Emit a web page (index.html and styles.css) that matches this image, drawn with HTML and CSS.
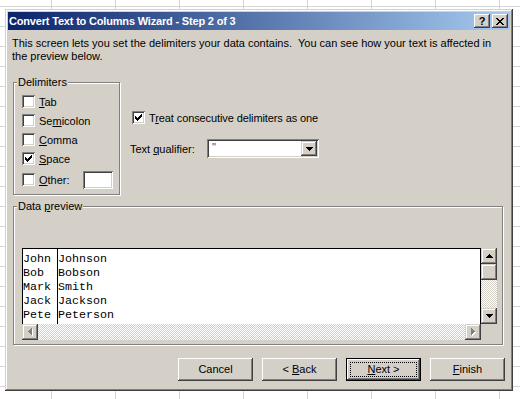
FILE: index.html
```html
<!DOCTYPE html>
<html>
<head>
<meta charset="utf-8">
<link rel="stylesheet" href="styles.css">
</head>
<body>
<div class="dialog">
  <div class="titlebar">
    <span class="title">Convert Text to Columns Wizard - Step 2 of 3</span>
    <div class="tb-buttons">
      <span class="tb-btn help">?</span>
      <span class="tb-btn close"><svg width="8" height="7" viewBox="0 0 8 7"><path d="M0 0h2v1H0zM6 0h2v1H6zM1 1h2v1H1zM5 1h2v1H5zM2 2h4v1H2zM3 3h2v1H3zM2 4h4v1H2zM1 5h2v1H1zM5 5h2v1H5zM0 6h2v1H0zM6 6h2v1H6z" fill="#000"/></svg></span>
    </div>
  </div>
  <div class="content">
    <p class="intro">This screen lets you set the delimiters your data contains.&nbsp; You can see how your text is affected in<br>the preview below.</p>
    <div class="options">
      <div class="group delims">
        <span class="group-label">Delimiters</span>
        <div class="check-row"><span class="checkbox"></span><span><u>T</u>ab</span></div>
        <div class="check-row"><span class="checkbox"></span><span>Se<u>m</u>icolon</span></div>
        <div class="check-row"><span class="checkbox"></span><span><u>C</u>omma</span></div>
        <div class="check-row"><span class="checkbox checked"><svg width="13" height="13" viewBox="0 0 13 13"><path d="M3.5 5v3M4.5 6v3M5.5 7v3M6.5 6v3M7.5 5v3M8.5 4v3M9.5 3v3" stroke="#000" stroke-width="1"/></svg></span><span><u>S</u>pace</span></div>
        <div class="check-row other-row"><span class="checkbox"></span><span><u>O</u>ther:</span><span class="textbox"></span></div>
      </div>
      <div class="right-col">
        <div class="check-row treat-row"><span class="checkbox checked"><svg width="13" height="13" viewBox="0 0 13 13"><path d="M3.5 5v3M4.5 6v3M5.5 7v3M6.5 6v3M7.5 5v3M8.5 4v3M9.5 3v3" stroke="#000" stroke-width="1"/></svg></span><span class="treat-label">T<u>r</u>eat consecutive delimiters as one</span></div>
        <div class="qual-row">
          <span class="qual-label">Text <u>q</u>ualifier:</span>
          <span class="combo"><span class="combo-value">"</span><span class="combo-btn"><svg width="7" height="4" viewBox="0 0 7 4"><path d="M0 0h7v1H0zM1 1h5v1H1zM2 2h3v1H2zM3 3h1v1H3z" fill="#000"/></svg></span></span>
        </div>
      </div>
    </div>
    <div class="group preview-group">
      <span class="group-label">Data <u>p</u>review</span>
      <div class="preview">
        <div class="data">
          <div class="col col1">John<br>Bob<br>Mark<br>Jack<br>Pete</div>
          <div class="col col2">Johnson<br>Bobson<br>Smith<br>Jackson<br>Peterson</div>
        </div>
        <div class="vscroll">
          <span class="sb-btn"><svg width="7" height="4" viewBox="0 0 7 4"><path d="M3 0h1v1H3zM2 1h3v1H2zM1 2h5v1H1zM0 3h7v1H0z" fill="#000"/></svg></span>
          <span class="sb-btn"></span>
          <span class="track"></span>
          <span class="sb-btn"><svg width="7" height="4" viewBox="0 0 7 4"><path d="M0 0h7v1H0zM1 1h5v1H1zM2 2h3v1H2zM3 3h1v1H3z" fill="#000"/></svg></span>
        </div>
        <div class="hscroll">
          <span class="sb-btn"><svg width="5" height="8" viewBox="0 0 5 8"><path d="M4 1h1v7H4zM3 2h1v5H3zM2 3h1v3H2zM1 4h1v1H1z" fill="#fff"/><path d="M3 0h1v7H3zM2 1h1v5H2zM1 2h1v3H1zM0 3h1v1H0z" fill="#808080"/></svg></span>
          <span class="track"></span>
          <span class="sb-btn"><svg width="5" height="8" viewBox="0 0 5 8"><path d="M1 1h1v7H1zM2 2h1v5H2zM3 3h1v3H3zM4 4h1v1H4z" fill="#fff"/><path d="M0 0h1v7H0zM1 1h1v5H1zM2 2h1v3H2zM3 3h1v1H3z" fill="#808080"/></svg></span>
        </div>
        <div class="corner"></div>
      </div>
    </div>
    <div class="buttons">
      <span class="btn"><span>Cancel</span></span>
      <span class="btn"><span>&lt; <u>B</u>ack</span></span>
      <span class="btn default"><span><u>N</u>ext &gt;</span></span>
      <span class="btn"><span><u>F</u>inish</span></span>
    </div>
  </div>
</div>
</body>
</html>
```
FILE: styles.css
```css
html, body {
  margin: 0;
  height: 100%;
}
body {
  background-color: #fff;
  background-image:
    linear-gradient(to right, #d4d4d4 1px, transparent 1px),
    linear-gradient(to bottom, #d4d4d4 1px, transparent 1px);
  background-size: 64px 20px;
  background-position: 51px 6px;
  font-family: "Liberation Sans", Arial, sans-serif;
  font-size: 11px;
  color: #000;
  overflow: hidden;
}
.dialog {
  width: 508px;
  height: 382px;
  margin: 9px 0 0 5px;
  box-sizing: border-box;
  padding: 3px;
  background: #d4d0c8;
  box-shadow: inset -1px -1px #404040, inset 1px 1px #d4d0c8, inset -2px -2px #808080, inset 2px 2px #fff;
  display: flex;
  flex-direction: column;
}
.titlebar {
  height: 18px;
  flex: none;
  background: linear-gradient(to right, #0a246a, #a6caf0);
  display: flex;
  align-items: center;
  justify-content: space-between;
  padding: 0 2px 0 1px;
  color: #fff;
  font-weight: bold;
}
.title {
  line-height: 13px;
  letter-spacing: -0.18px;
}
.tb-buttons { display: flex; gap: 2px; }
.tb-btn {
  width: 16px;
  height: 14px;
  box-sizing: border-box;
  background: #d4d0c8;
  box-shadow: inset -1px -1px #404040, inset 1px 1px #fff, inset -2px -2px #808080;
  display: flex;
  align-items: center;
  justify-content: center;
  color: #000;
  font-size: 11px;
  line-height: 11px;
}
.content {
  flex: 1;
  display: flex;
  flex-direction: column;
}
.intro {
  margin: 7px 0 0 4px;
  line-height: 13px;
}
.options {
  display: flex;
  margin: 19px 0 0 5px;
}
.group {
  position: relative;
  border: 1px solid #808080;
  box-shadow: inset 1px 1px #fff, 1px 1px #fff;
  box-sizing: border-box;
}
.group-label {
  position: absolute;
  top: -7px;
  left: 3px;
  padding: 0 1px;
  background: #d4d0c8;
  line-height: 13px;
}
.delims {
  width: 107px;
  height: 113px;
  padding: 9px 0 0 8px;
}
.check-row {
  display: flex;
  align-items: center;
  height: 19px;
}
.checkbox {
  flex: none;
  width: 13px;
  height: 13px;
  box-sizing: border-box;
  background: #fff;
  box-shadow: inset 1px 1px #808080, inset -1px -1px #fff, inset 2px 2px #404040, inset -2px -2px #d4d0c8;
  margin-right: 4px;
}
.checkbox svg { display: block; }
.other-row {
  margin-top: 2px;
  padding-right: 6px;
}
.textbox {
  margin-left: auto;
  width: 30px;
  height: 18px;
  box-sizing: border-box;
  background: #fff;
  box-shadow: inset 1px 1px #808080, inset -1px -1px #fff, inset 2px 2px #404040, inset -2px -2px #d4d0c8;
}
.right-col {
  margin-left: 10px;
}
.treat-row {
  margin-top: 26px;
  padding-left: 2px;
}
.treat-label { letter-spacing: -0.1px; }
.qual-row {
  display: flex;
  align-items: center;
  height: 19px;
  margin-top: 12px;
}
.qual-label { width: 77px; }
.combo {
  width: 112px;
  height: 19px;
  box-sizing: border-box;
  padding: 2px;
  background: #fff;
  box-shadow: inset 1px 1px #808080, inset -1px -1px #fff, inset 2px 2px #404040, inset -2px -2px #d4d0c8;
  display: flex;
  justify-content: space-between;
}
.combo-value {
  color: #0a4ea5;
  padding-left: 3px;
  line-height: 13px;
}
.combo-btn {
  width: 16px;
  height: 15px;
  box-sizing: border-box;
  background: #d4d0c8;
  box-shadow: inset -1px -1px #404040, inset 1px 1px #d4d0c8, inset -2px -2px #808080, inset 2px 2px #fff;
  display: flex;
  align-items: center;
  justify-content: center;
}
.preview-group {
  margin: 11px 0 0 5px;
  width: 490px;
  height: 139px;
}
.preview {
  margin: 41px 0 0 8px;
  width: 475px;
  height: 92px;
  display: grid;
  grid-template-columns: 1fr 16px;
  grid-template-rows: 1fr 16px;
}
.data {
  background: #fff;
  border: 1px solid #000;
  border-bottom: none;
  display: flex;
  font-family: "Liberation Mono", "Courier New", monospace;
  font-size: 11.67px;
  line-height: 14px;
}
.col { padding-top: 3px; }
.col1 { width: 34px; }
.col2 { border-left: 1px solid #000; }
.vscroll {
  display: flex;
  flex-direction: column;
}
.hscroll {
  display: flex;
}
.sb-btn {
  flex: none;
  width: 16px;
  height: 16px;
  box-sizing: border-box;
  background: #d4d0c8;
  box-shadow: inset -1px -1px #404040, inset 1px 1px #d4d0c8, inset -2px -2px #808080, inset 2px 2px #fff;
  display: flex;
  align-items: center;
  justify-content: center;
}
.track {
  flex: 1;
  background: repeating-conic-gradient(#d4d0c8 0 25%, #fff 0 50%) 0 0 / 2px 2px;
}
.corner { background: #d4d0c8; }
.buttons {
  display: flex;
  justify-content: flex-end;
  gap: 9px;
  margin-top: 13px;
  padding-right: 5px;
}
.btn {
  width: 75px;
  height: 23px;
  box-sizing: border-box;
  background: #d4d0c8;
  box-shadow: inset -1px -1px #404040, inset 1px 1px #fff, inset -2px -2px #808080, inset 2px 2px #d4d0c8;
  display: flex;
  align-items: center;
  justify-content: center;
  line-height: 13px;
}
.btn.default {
  position: relative;
  box-shadow: inset 0 0 0 1px #000, inset -2px -2px #404040, inset 2px 2px #fff, inset -3px -3px #808080;
}
.btn.default::after {
  content: "";
  position: absolute;
  left: 4px;
  top: 4px;
  right: 4px;
  bottom: 4px;
  border: 1px dotted #000;
}
```
